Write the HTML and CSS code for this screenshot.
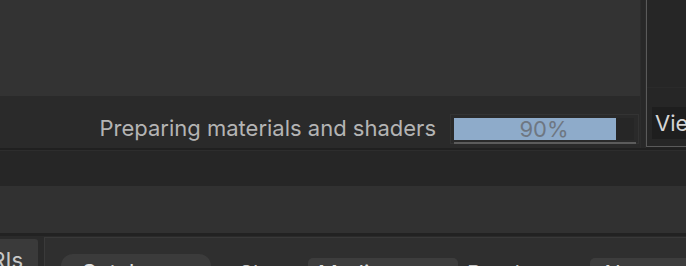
FILE: index.html
```html
<!DOCTYPE html>
<html>
<head>
<meta charset="utf-8">
<link rel="stylesheet" href="styles.css">
</head>
<body>
<div class="app">
  <div class="top">
    <div class="main">
      <div class="viewport"></div>
      <div class="status">
        <span class="status-text">Preparing materials and shaders</span>
        <div class="progress">
          <div class="track">
            <div class="fill" style="width: 90%"></div>
            <span class="pct">90%</span>
          </div>
          <div class="rule"></div>
        </div>
      </div>
    </div>
    <div class="divider"></div>
    <div class="side">
      <div class="side-inner">
        <div class="side-view"></div>
        <div class="side-status">
          <span class="side-btn">View</span>
        </div>
      </div>
    </div>
  </div>
  <div class="band"></div>
  <div class="mid"></div>
  <div class="bottom">
    <div class="tab"><span>URIs</span></div>
    <div class="panel">
      <div class="pill">Catalog</div>
      <span class="lbl lbl-show">Show</span>
      <div class="dropdown dd-medium">Medium</div>
      <span class="lbl lbl-render">Render</span>
      <div class="dropdown dd-last">Always</div>
    </div>
  </div>
</div>
</body>
</html>
```
FILE: styles.css
```css
* { box-sizing: border-box; }
html, body { margin: 0; padding: 0; }
body {
  width: 686px;
  height: 266px;
  overflow: hidden;
  background: #262626;
  font-family: "Inter", "Noto Sans", sans-serif;
  font-size: 22px;
}
.app { width: 686px; height: 266px; display: flex; flex-direction: column; }

.top { display: flex; height: 148px; }
.main { width: 640px; display: flex; flex-direction: column; }
.viewport { height: 96px; background: #333333; }
.status {
  height: 52px;
  background: #2a2a2a;
  display: flex;
  align-items: flex-start;
  justify-content: flex-end;
  padding: 18px 1px 0 0;
}
.status-text {
  color: #b4b4b4;
  line-height: 26px;
  margin-top: 1px;
  margin-right: 14px;
  white-space: nowrap;
}
.progress {
  width: 189px;
  height: 30px;
  border: 1px solid #333333;
  padding: 3px 2px 0 3px;
}
.track {
  position: relative;
  height: 22px;
  background: #262626;
  margin-right: 2px;
}
.fill { height: 100%; background: #8eabca; }
.pct {
  position: absolute;
  left: 0; right: 0; top: 0;
  text-align: center;
  line-height: 22px;
  color: #6e7782;
}
.rule { height: 2px; margin-top: 2px; background: #5c5c5c; }

.divider {
  width: 6px;
  background: #282828;
  border-left: 1px solid #2d2d2d;
  border-right: 1px solid #2c2c2c;
}
.side { width: 40px; background: #222222; }
.side-inner {
  height: 147px;
  border-left: 1px solid #5a5a5a;
  border-bottom: 1px solid #5a5a5a;
  background: #262626;
  display: flex;
  flex-direction: column;
}
.side-view { height: 88px; border-bottom: 1px solid #2a2a2a; }
.side-status { padding: 19px 0 0 5px; }
.side-btn {
  display: block;
  height: 32px;
  background: #1e1e1e;
  color: #d6d6d6;
  padding-left: 3px;
  line-height: 32px;
  white-space: nowrap;
  overflow: hidden;
}

.band {
  height: 38px;
  background: #262626;
  border-top: 2px solid #202020;
  box-shadow: inset 0 1px 0 #2d2d2d;
}
.mid { height: 47px; background: #313131; }

.bottom {
  flex: 1;
  display: flex;
  background: #2a2a2a;
  border-top: 3px solid #222222;
  overflow: hidden;
}
.tab {
  flex: none;
  width: 38px;
  margin-top: 3px;
  background: #3a3a3a;
  color: #c8c8c8;
  line-height: 26px;
  padding: 8px 15px 0 0;
  display: flex;
  justify-content: flex-end;
  white-space: nowrap;
  overflow: hidden;
  border-top-right-radius: 3px;
}
.tab span { flex: none; }
.panel {
  flex: 1;
  min-width: 0;
  margin-left: 6px;
  margin-top: 1px;
  background: #2f2f2f;
  border-left: 1px solid #3a3a3a;
  border-top: 1px solid #393939;
  display: flex;
  align-items: flex-start;
  padding: 16px 0 0 16px;
  white-space: nowrap;
  overflow: hidden;
}
.pill {
  flex: none;
  width: 150px;
  height: 30px;
  border-radius: 12px;
  background: #3b3b3b;
  color: #e0e0e0;
  padding: 5px 0 0 20px;
  line-height: 26px;
}
.lbl { flex: none; color: #c4c4c4; line-height: 26px; margin-top: 6px; }
.lbl-show { margin-left: 28px; }
.lbl-render { margin-left: 9px; }
.dropdown {
  flex: none;
  height: 30px;
  border-radius: 5px;
  background: #3d3d3d;
  color: #e0e0e0;
  margin-top: 4px;
  padding: 2px 0 0 10px;
  line-height: 26px;
  overflow: hidden;
}
.dd-medium { width: 150px; margin-left: 11px; }
.dd-last { width: 120px; margin-left: 49px; }
```
